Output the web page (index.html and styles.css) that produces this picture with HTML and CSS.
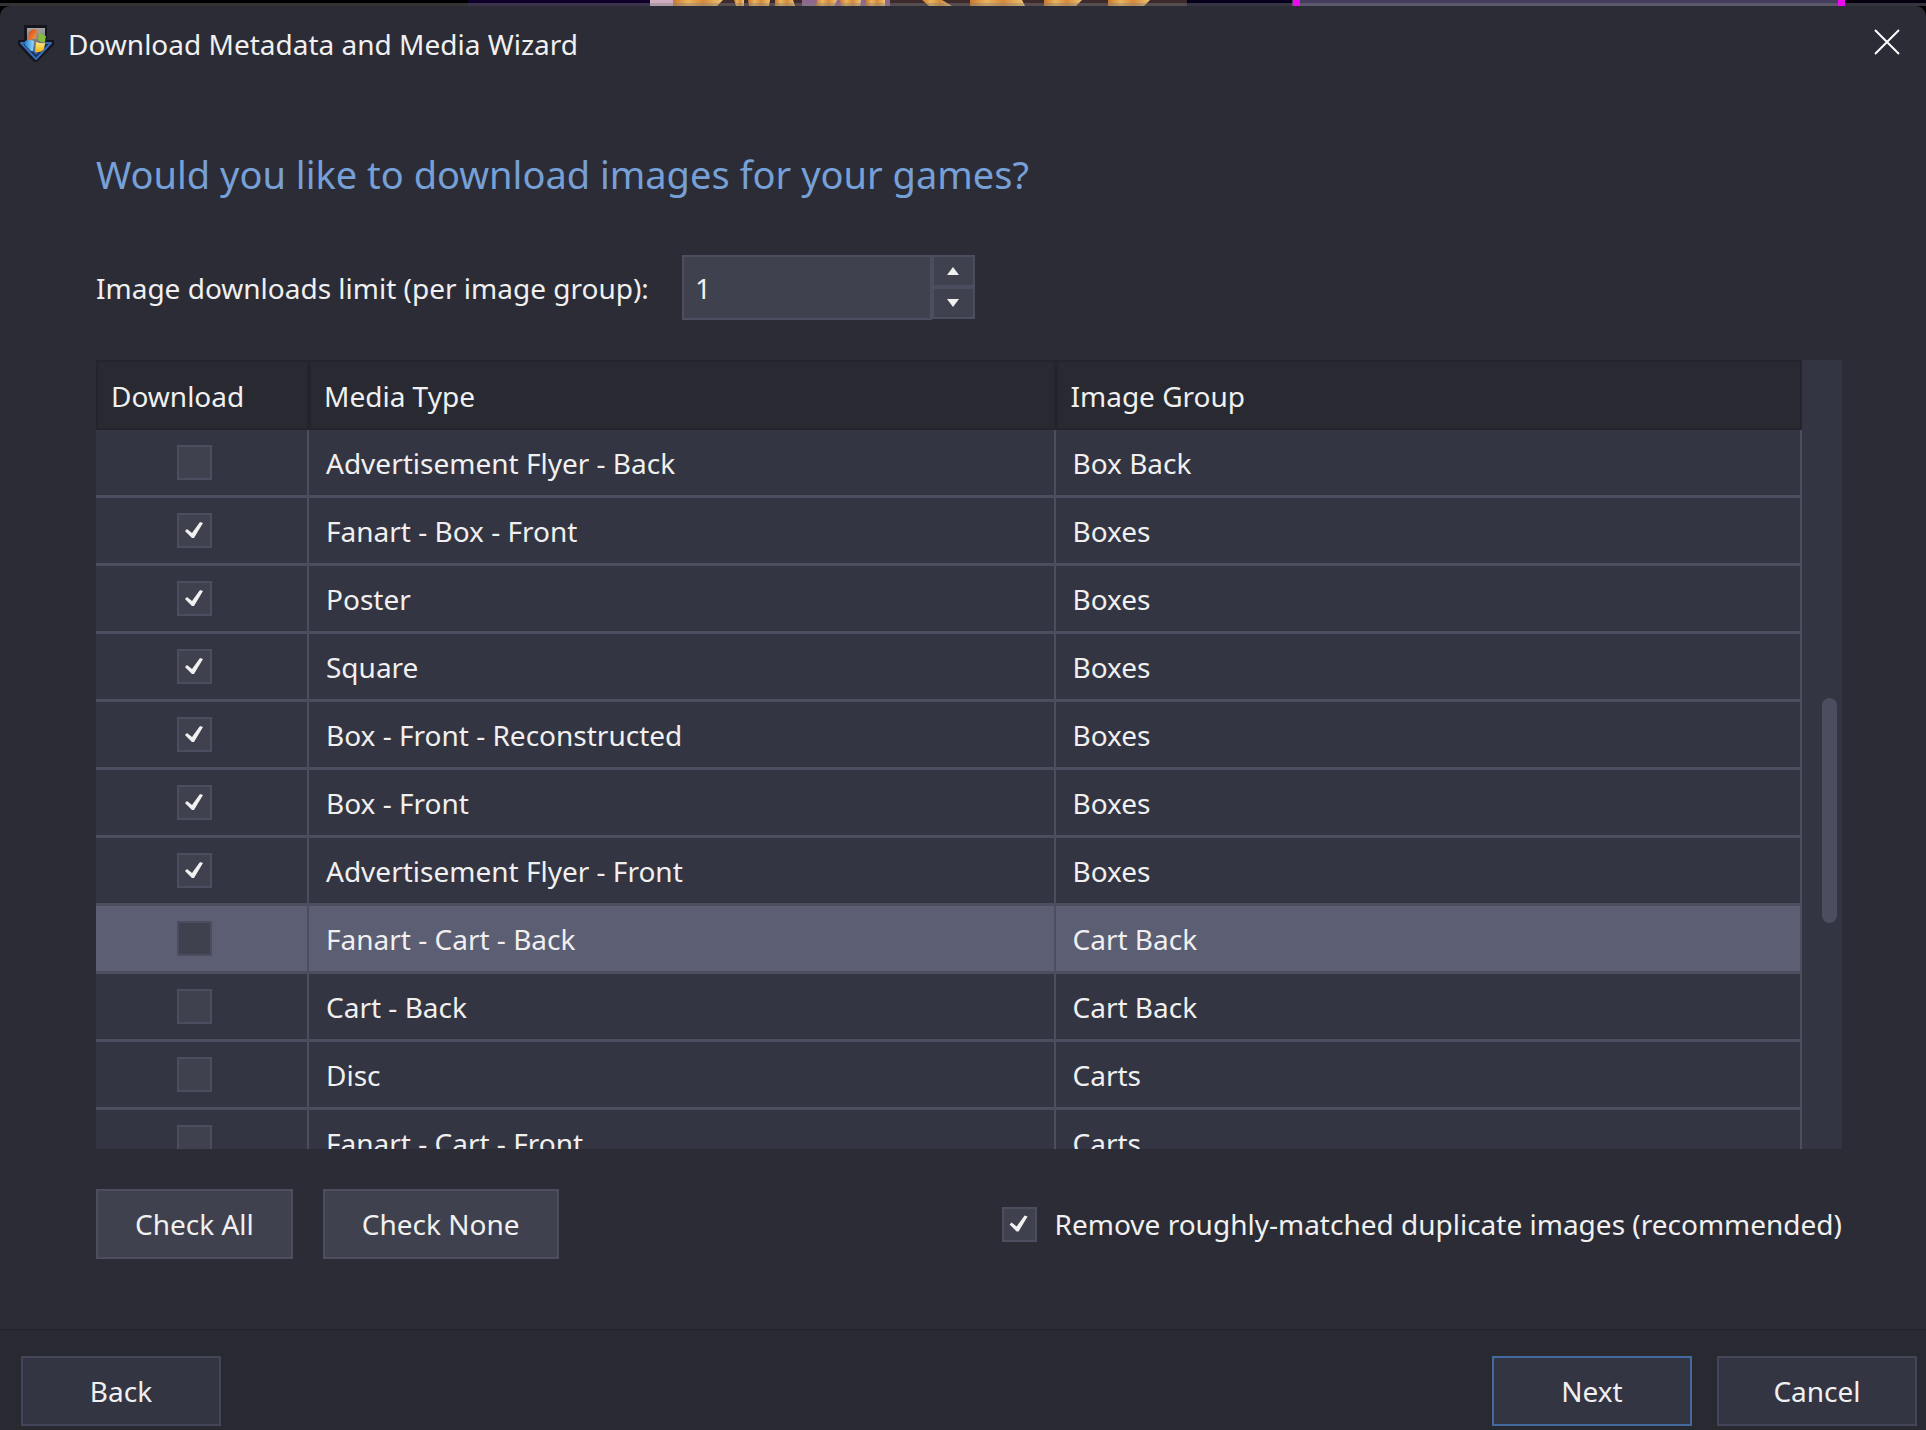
FILE: index.html
```html
<!DOCTYPE html>
<html lang="en">
<head>
<meta charset="utf-8">
<title>Download Metadata and Media Wizard</title>
<link rel="stylesheet" href="styles.css">
</head>
<body>
<div class="desktop" aria-hidden="true">
  <svg class="desktop-art" viewBox="0 0 1926 30" preserveAspectRatio="none">
    <defs>
      <linearGradient id="flame" x1="0" y1="0" x2="1" y2="0" spreadMethod="reflect">
        <stop offset="0" stop-color="#c9782f"/><stop offset=".3" stop-color="#eab45c"/><stop offset=".6" stop-color="#d58a3a"/><stop offset="1" stop-color="#f0c574"/>
      </linearGradient>
    </defs>
    <rect width="1926" height="30" fill="#000"/>
    <rect x="468" width="182" height="6" fill="#0e0029"/>
    <rect x="650" width="537" height="6" fill="#3d2a2c"/>
    <rect x="650" width="24" height="6" fill="#cfaebf"/>
    <rect x="802" width="88" height="6" fill="#8f6690"/>
    <g fill="url(#flame)">
      <path d="M673 0h50l-6 6h-44z"/>
      <path d="M734 0h10v6h-8z"/>
      <path d="M748 0h22l-1 6h-20z"/>
      <path d="M775 0h18l2 6h-20z"/>
      <path d="M817 0h20l-3 6h-18z"/>
      <path d="M840 0h21l-1 6h-19z"/>
      <path d="M866 0h19v6h-19z"/>
      <path d="M922 0h20l10 6h-23z"/>
      <path d="M970 0h52l3 6h-55z"/>
      <path d="M1044 0h38l-6 6h-32z"/>
      <path d="M1108 0h42l-6 6h-36z"/>
    </g>
    <rect x="1187" width="105" height="6" fill="#07001c"/>
    <rect x="1292" width="553" height="6" fill="#453d5c"/>
    <rect x="1845" width="81" height="6" fill="#05000f"/>
    <rect y="3" width="1926" height="3" fill="#808080" fill-opacity=".4"/>
    <rect x="1293" width="7" height="6" fill="#ee09ee"/>
    <rect x="1838" width="7" height="6" fill="#ee09ee"/>
  </svg>
</div>
<div class="window">
  <header class="titlebar">
    <svg class="app-icon" viewBox="0 0 36 38" aria-hidden="true">
      <defs>
        <linearGradient id="shaft" x1="0" y1="0" x2="0" y2="1">
          <stop offset="0" stop-color="#a5a5a5"/><stop offset=".5" stop-color="#77797c"/><stop offset="1" stop-color="#2a63b8"/>
        </linearGradient>
        <linearGradient id="red" x1="0" y1="0" x2="1" y2="1"><stop offset="0" stop-color="#d8400f"/><stop offset="1" stop-color="#f7a04a"/></linearGradient>
        <linearGradient id="blue" x1="0" y1="0" x2="1" y2="0"><stop offset="0" stop-color="#1e86d6"/><stop offset="1" stop-color="#9fd8f5"/></linearGradient>
        <linearGradient id="yellow" x1="0" y1="0" x2="0" y2="1"><stop offset="0" stop-color="#fdea8a"/><stop offset="1" stop-color="#f0b400"/></linearGradient>
      </defs>
      <path d="M6 0h23v15h7v5L19 37h-3L0 20v-5h6z" fill="#14151e"/>
      <path d="M3 18h30L18 34z" fill="#17305f" stroke="#3a6cb4" stroke-width="2" stroke-linejoin="round"/>
      <path d="M9 3h18v17l-9 10-9-10z" fill="url(#shaft)"/>
      <path d="M11 7q4-4 8-2l-1 9q-4-1-8 2z" fill="url(#red)"/>
      <path d="M21 7q3 3 7 4l-1 6q-3 1-7-2z" fill="#86bd3a"/>
      <path d="M7 16q5-2 9 0l-1 10-2 0-6-6z" fill="url(#blue)"/>
      <path d="M18 17q5 2 9 1l-1 6q-3 4-9 3z" fill="url(#yellow)"/>
    </svg>
    <h1 class="title">Download Metadata and Media Wizard</h1>
    <button class="close" type="button" aria-label="Close">
      <svg viewBox="0 0 26 26" aria-hidden="true"><path d="M1 1l24 24M25 1L1 25"/></svg>
    </button>
  </header>

  <main class="content">
    <h2 class="question">Would you like to download images for your games?</h2>

    <div class="limit">
      <label for="limit">Image downloads limit (per image group):</label>
      <div class="spinner">
        <input id="limit" class="spinner-value" type="text" inputmode="numeric" value="1">
        <div class="spinner-buttons">
          <button type="button" aria-label="Increase"><svg viewBox="0 0 12 8" aria-hidden="true"><path d="M6 0l6 8H0z"/></svg></button>
          <button type="button" aria-label="Decrease"><svg viewBox="0 0 12 8" aria-hidden="true"><path d="M0 0h12L6 8z"/></svg></button>
        </div>
      </div>
    </div>

    <div class="grid">
      <div class="grid-view">
        <table class="media">
          <colgroup><col class="col-download"><col><col></colgroup>
          <thead>
            <tr><th scope="col">Download</th><th scope="col">Media Type</th><th scope="col">Image Group</th></tr>
          </thead>
          <tbody>
            <tr><td><input type="checkbox" aria-label="Advertisement Flyer - Back"></td><td>Advertisement Flyer - Back</td><td>Box Back</td></tr>
            <tr><td><input type="checkbox" aria-label="Fanart - Box - Front" checked></td><td>Fanart - Box - Front</td><td>Boxes</td></tr>
            <tr><td><input type="checkbox" aria-label="Poster" checked></td><td>Poster</td><td>Boxes</td></tr>
            <tr><td><input type="checkbox" aria-label="Square" checked></td><td>Square</td><td>Boxes</td></tr>
            <tr><td><input type="checkbox" aria-label="Box - Front - Reconstructed" checked></td><td>Box - Front - Reconstructed</td><td>Boxes</td></tr>
            <tr><td><input type="checkbox" aria-label="Box - Front" checked></td><td>Box - Front</td><td>Boxes</td></tr>
            <tr><td><input type="checkbox" aria-label="Advertisement Flyer - Front" checked></td><td>Advertisement Flyer - Front</td><td>Boxes</td></tr>
            <tr class="selected"><td><input type="checkbox" aria-label="Fanart - Cart - Back"></td><td>Fanart - Cart - Back</td><td>Cart Back</td></tr>
            <tr><td><input type="checkbox" aria-label="Cart - Back"></td><td>Cart - Back</td><td>Cart Back</td></tr>
            <tr><td><input type="checkbox" aria-label="Disc"></td><td>Disc</td><td>Carts</td></tr>
            <tr><td><input type="checkbox" aria-label="Fanart - Cart - Front"></td><td>Fanart - Cart - Front</td><td>Carts</td></tr>
          </tbody>
        </table>
      </div>
      <div class="scrollbar" aria-hidden="true"><div class="thumb"></div></div>
    </div>

    <div class="options">
      <button class="btn" type="button">Check All</button>
      <button class="btn" type="button">Check None</button>
      <label class="dedupe"><input type="checkbox" checked><span>Remove roughly-matched duplicate images (recommended)</span></label>
    </div>
  </main>

  <footer class="footer">
    <button class="nav" type="button">Back</button>
    <button class="nav next" type="button">Next</button>
    <button class="nav" type="button">Cancel</button>
  </footer>
</div>
</body>
</html>
```

FILE: styles.css
```css
:root {
  --window: #2c2c36;
  --chrome: #292932;
  --edge: #24242d;
  --row: #343542;
  --line: #4c4d5e;
  --control: #3f414e;
  --text: #f0f0f0;
}

* { box-sizing: border-box; }

body {
  margin: 0;
  height: 100vh;
  display: flex;
  flex-direction: column;
  overflow: hidden;
  background: #000;
  color: var(--text);
  font: 28px/38px "Noto Sans", "Segoe UI", sans-serif;
}

button, input {
  margin: 0;
  padding: 0;
  font: inherit;
  color: inherit;
}

.desktop { height: 6px; }
.desktop-art { display: block; width: 100%; height: 30px; }

.window {
  position: relative;
  flex: 1;
  min-height: 0;
  display: flex;
  flex-direction: column;
  background: var(--window);
  border-radius: 10px 10px 0 0;
}

.titlebar {
  display: flex;
  align-items: center;
  height: 76px;
  padding: 0 26px 0 18px;
}
.app-icon { width: 36px; height: 38px; }
.title {
  flex: 1;
  margin: 0 0 0 14px;
  font-size: 28px;
  font-weight: 400;
}
.close {
  width: 26px;
  height: 30px;
  border: 0;
  background: none;
}
.close svg { display: block; width: 26px; height: 26px; margin-bottom: 4px; }
.close path { stroke: #fff; stroke-width: 2; }

.content {
  flex: 1;
  min-height: 0;
  display: flex;
  flex-direction: column;
  padding: 66px 84px 70px 96px;
}
.question {
  margin: 0;
  color: #76a0d6;
  font-size: 38px;
  font-weight: 400;
  line-height: 52px;
}

.limit {
  display: flex;
  align-items: center;
  gap: 33px;
  margin-top: 55px;
}
.spinner { display: flex; align-items: flex-start; }
.spinner-value {
  width: 250px;
  height: 65px;
  padding: 0 11px;
  border: 2px solid var(--line);
  background: var(--control);
}
.spinner-buttons { display: flex; flex-direction: column; }
.spinner-buttons button {
  display: grid;
  place-items: center;
  width: 43px;
  height: 32px;
  border: 2px solid var(--line);
  background: var(--control);
}
.spinner-buttons svg { width: 12px; height: 8px; fill: var(--text); }

.grid {
  flex: 1;
  min-height: 0;
  display: flex;
  margin-top: 40px;
  background: var(--row);
}
.grid-view { flex: 1; overflow: hidden; }
.media {
  width: 100%;
  table-layout: fixed;
  border-collapse: separate;
  border-spacing: 0;
}
.col-download { width: 213px; }
.media th {
  height: 70px;
  padding: 2px 13px 0;
  border: 2px solid var(--edge);
  background: var(--chrome);
  font-weight: 400;
  text-align: left;
}
.media td {
  height: 68px;
  padding: 1px 17px 0;
  border: solid var(--line);
  border-width: 0 2px 3px 0;
}
.media td:first-child { padding: 0 14px 0 0; }
.selected td { background: #5c5e73; }

input[type="checkbox"] {
  appearance: none;
  display: block;
  width: 35px;
  height: 35px;
  border: 2px solid var(--line);
  background: var(--control);
}
.media input[type="checkbox"] { margin: 0 auto; }
input[type="checkbox"]:checked::before {
  content: "";
  display: block;
  width: 31px;
  height: 31px;
  background: var(--text);
  clip-path: polygon(6px 16px, 8px 14px, 13px 18px, 21px 7px, 24px 8px, 15px 23px, 13px 23px);
}

.scrollbar {
  display: grid;
  grid-template-rows: 338fr 225fr 226fr;
  width: 40px;
  padding: 0 5px 0 20px;
}
.thumb { grid-row: 2; border-radius: 8px; background: var(--line); }

.options {
  display: flex;
  align-items: center;
  gap: 30px;
  margin-top: 40px;
}
.btn {
  height: 70px;
  padding: 0 37px;
  border: 2px solid var(--line);
  background: var(--control);
}
.dedupe {
  display: flex;
  align-items: center;
  gap: 18px;
  margin-left: auto;
}

.footer {
  display: flex;
  gap: 25px;
  padding: 25px 9px 4px 21px;
  border-top: 2px solid var(--edge);
  background: var(--chrome);
}
.nav {
  width: 200px;
  height: 70px;
  border: 2px solid #434559;
  background: var(--row);
}
.next { margin-left: auto; border-color: #426a9f; }
```
